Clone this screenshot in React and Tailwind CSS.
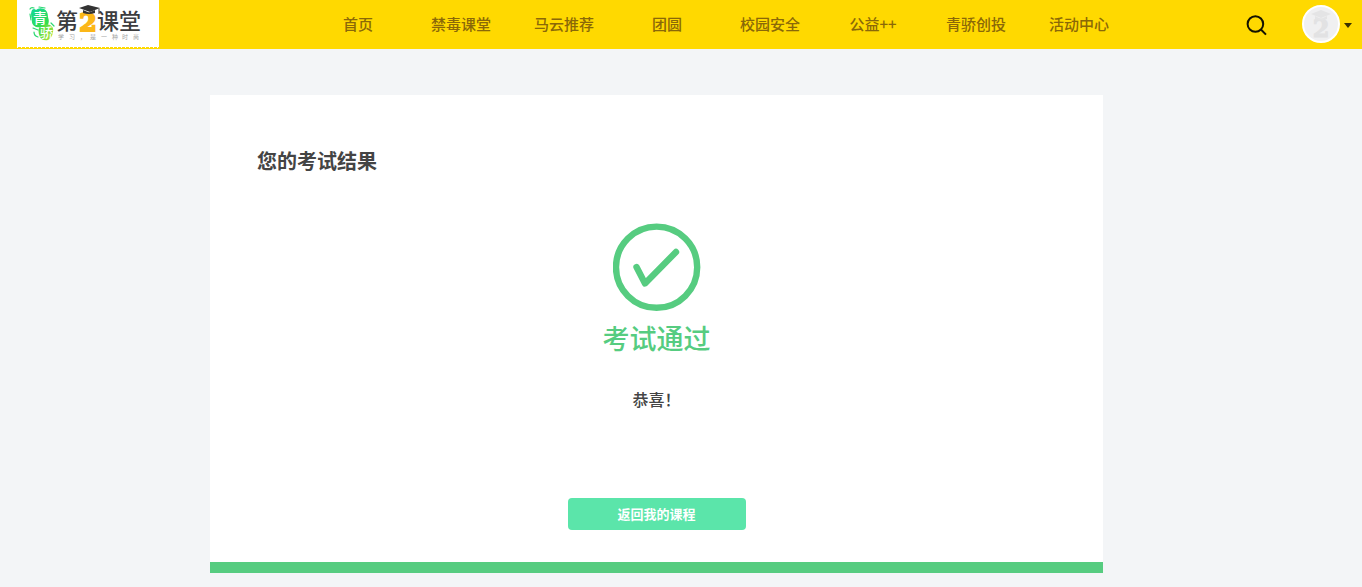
import React from 'react';

const navItems = ['首页', '禁毒课堂', '马云推荐', '团圆', '校园安全', '公益++', '青骄创投', '活动中心'];

function Logo() {
  return (
    <svg viewBox="0 0 142 49" className="block h-[49px] w-[142px]" role="img" aria-label="青骄第2课堂">
      <defs>
        <linearGradient id="leaf" x1="0" y1="0" x2="0.6" y2="1">
          <stop offset="0" stopColor="#0fd79a" />
          <stop offset="1" stopColor="#35dd4c" />
        </linearGradient>
        <linearGradient id="leafLow" x1="0" y1="0" x2="1" y2="1">
          <stop offset="0" stopColor="#35dc4c" />
          <stop offset="1" stopColor="#b9e336" />
        </linearGradient>
      </defs>

      {/* Green badge */}
      <path d="M15 10 Q17 8 19 10 Q22 7 27 9 Q31 11 31 17 Q33 23 30 26 Q25 28 19 27 Q14 25 15 19 Q13 14 15 10Z" fill="url(#leaf)" />
      <path d="M23 26 Q28 23 33 25 Q37 27 36 32 Q35 38 31 40 Q25 41 23 37 Q20 31 23 26Z" fill="url(#leafLow)" />
      <path d="M13 9 Q14 7 17 8 M22 7 L28 8 M13 14 L14 20 M16 28 L21 30 M17 32 Q17 36 21 37 M34 23 L37 26" fill="none" stroke="#2bd873" strokeWidth="1.2" strokeLinecap="round" />
      <g fill="#fff" fontWeight="500" className="font-['Noto_Sans_CJK_SC',sans-serif]">
        <text x="16" y="23" fontSize="14">青</text>
        <text x="23" y="37" fontSize="13">骄</text>
      </g>

      {/* Wordmark */}
      <g fill="#3c3c3e" fontSize="22" fontWeight="500" className="font-['Noto_Sans_CJK_SC',sans-serif]">
        <text x="39" y="29">第</text>
        <text x="80" y="29">课</text>
        <text x="102" y="29">堂</text>
      </g>
      <text x="71" y="31" textAnchor="middle" fontSize="25" fontWeight="700" fill="#fbb719" stroke="#fbb719" strokeWidth="2" className="font-['DejaVu_Serif',serif]">2</text>
      <path d="M62 8 L71 5 L83 8 L73 12Z" fill="#333" />
      <path d="M66 10 L66 13 Q72 15 78 13 L78 10 L72 12.5Z" fill="#333" />
      <path d="M82 8.5 L82 14" stroke="#333" strokeWidth="1" />
      <text x="41 52 63 73 84 95 105 116" y="39" fontSize="6" fill="#a5a5a5" className="font-['Noto_Sans_CJK_SC',sans-serif]">学习，是一种时尚</text>
      <path d="M0 48.5H142" stroke="#ffd900" />
      <path d="M1 47.5H142" stroke="#ffd900" strokeDasharray="3 1" />
    </svg>
  );
}

function Avatar() {
  return (
    <svg viewBox="0 0 38 38" className="size-[38px]" aria-hidden="true">
      <circle cx="19" cy="19" r="18" fill="#f0f0f1" stroke="#fff" strokeWidth="2" />
      <text x="19" y="32" textAnchor="middle" fontSize="24" fontWeight="700" fill="#e2e2e3" stroke="#e2e2e3" strokeWidth="1" className="font-['DejaVu_Serif',serif]">2</text>
      <path d="M9 9 L19 5 L29 9 L19 13Z" fill="#e4e4e5" />
      <path d="M13 11 V14 Q19 17 25 14 V11 L19 14Z" fill="#e4e4e5" />
    </svg>
  );
}

function Header() {
  return (
    <header className="flex h-[49px] items-start bg-[#ffd900] pl-[17px] pr-[10px]">
      <a href="#" className="shrink-0 bg-white">
        <Logo />
      </a>
      <nav className="flex flex-1 justify-center pl-8">
        {navItems.map((item) => (
          <a key={item} href="#" className="w-[103px] text-center text-[15px] leading-[47px] font-medium text-[#8a6808]">
            {item}
          </a>
        ))}
      </nav>
      <div className="flex h-12 shrink-0 items-center">
        <button type="button" aria-label="搜索" className="mr-[35px] mt-[3px]">
          <svg viewBox="0 0 21 21" className="block size-[21px]" fill="none" stroke="#141200" strokeWidth="2">
            <circle cx="9.4" cy="9" r="7.8" />
            <path d="M14.9 14.5 L20 19.6" />
          </svg>
        </button>
        <button type="button" aria-label="用户菜单" className="flex items-center gap-1">
          <Avatar />
          <svg viewBox="0 0 8 5" className="mt-0.5 h-[5px] w-2">
            <path d="M0 0H8L4 5Z" fill="#3a3200" />
          </svg>
        </button>
      </div>
    </header>
  );
}

export default function App() {
  return (
    <div className="min-h-screen bg-[#f3f5f7] font-['Noto_Sans_CJK_SC',sans-serif]">
      <Header />
      <main className="pt-[46px] pr-[49px] pb-[14px]">
        <section className="mx-auto flex max-w-[893px] flex-col items-center border-b-[11px] border-[#56cc80] bg-white px-[47px] pt-[50px] pb-8">
          <h1 className="self-stretch text-xl leading-8 font-bold text-[#444]">您的考试结果</h1>

          <svg viewBox="0 0 88 88" className="mt-[46px] size-[88px]" fill="none" stroke="#56cc80" aria-hidden="true">
            <circle cx="43.6" cy="44.2" r="40.6" strokeWidth="6.4" />
            <path d="M23.5 44 L32 60.5 L63 29" strokeWidth="6.4" strokeLinecap="round" strokeLinejoin="round" />
          </svg>
          <p className="mt-[7px] text-[27px] leading-10 font-medium text-[#56cc80]">考试通过</p>
          <p className="mt-[29px] text-base leading-6 font-medium text-[#444]">恭喜！</p>

          <button type="button" className="mt-[87px] h-8 w-[178px] rounded bg-[#5be5aa] text-[13px] font-bold text-white">
            返回我的课程
          </button>
        </section>
      </main>
    </div>
  );
}
